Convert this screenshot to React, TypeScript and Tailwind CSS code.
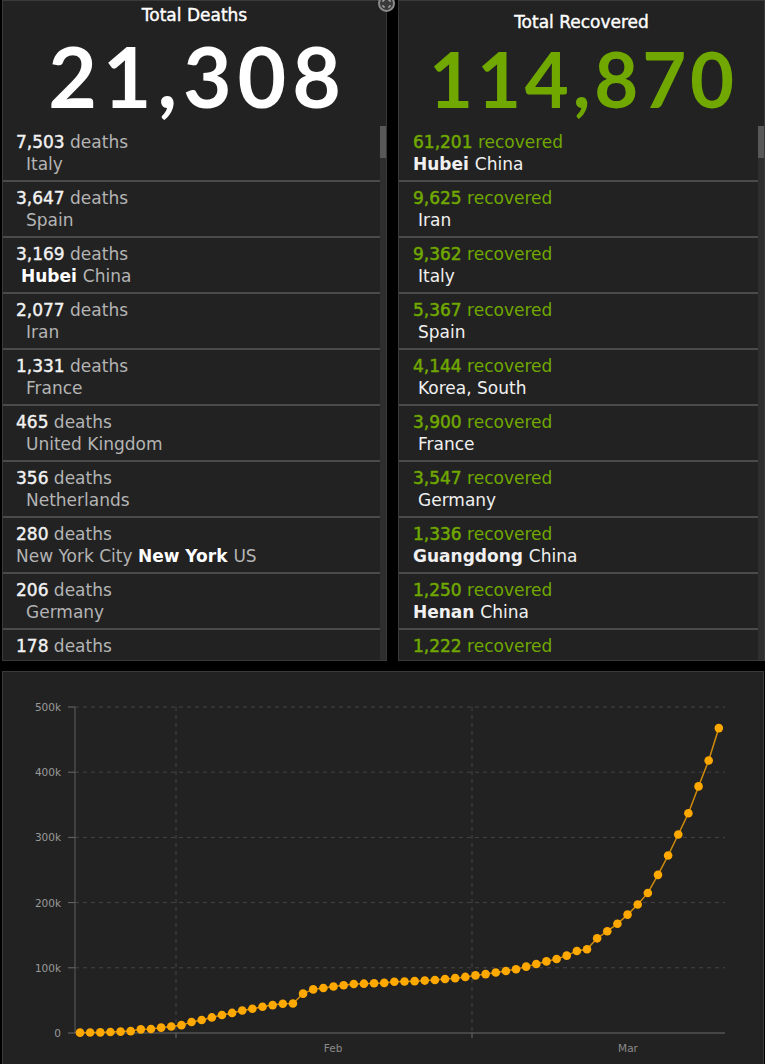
const deaths = [
  { n: "7,503", pre: "", bold: "", place: "Italy", indent: 10 },
  { n: "3,647", pre: "", bold: "", place: "Spain", indent: 10 },
  { n: "3,169", pre: "", bold: "Hubei", place: "China", indent: 5 },
  { n: "2,077", pre: "", bold: "", place: "Iran", indent: 10 },
  { n: "1,331", pre: "", bold: "", place: "France", indent: 10 },
  { n: "465", pre: "", bold: "", place: "United Kingdom", indent: 10 },
  { n: "356", pre: "", bold: "", place: "Netherlands", indent: 10 },
  { n: "280", pre: "New York City", bold: "New York", place: "US", indent: 0 },
  { n: "206", pre: "", bold: "", place: "Germany", indent: 10 },
  { n: "178", pre: "", bold: "", place: "", indent: 10 },
]

const recovered = [
  { n: "61,201", bold: "Hubei", place: "China", indent: 0 },
  { n: "9,625", bold: "", place: "Iran", indent: 5 },
  { n: "9,362", bold: "", place: "Italy", indent: 5 },
  { n: "5,367", bold: "", place: "Spain", indent: 5 },
  { n: "4,144", bold: "", place: "Korea, South", indent: 5 },
  { n: "3,900", bold: "", place: "France", indent: 5 },
  { n: "3,547", bold: "", place: "Germany", indent: 5 },
  { n: "1,336", bold: "Guangdong", place: "China", indent: 0 },
  { n: "1,250", bold: "Henan", place: "China", indent: 0 },
  { n: "1,222", bold: "", place: "", indent: 0 },
]

// global confirmed, Jan 22 .. Mar 25
const cases = [
  555, 654, 941, 1434, 2118, 2927, 5578, 6166, 8234, 9927, 12038, 16787, 19887, 23898, 27643, 30802,
  34395, 37129, 40160, 42769, 44811, 45229, 60381, 66909, 69052, 71235, 73270, 75152, 75652, 76212,
  76841, 78602, 78982, 79546, 80399, 81376, 82723, 84120, 86011, 88369, 90306, 92840, 95120, 97886,
  101801, 105847, 109821, 113590, 118620, 125875, 128352, 145205, 156101, 167454, 181574, 197102,
  214821, 242570, 272208, 304507, 336953, 378235, 418045, 467653,
]

const Scrollbar = () => (
  <div className="w-[6px] h-full bg-[#2e2e2e] shrink-0">
    <div className="h-[32px] bg-[#585858]" />
  </div>
)

const Chart = () => {
  const px = (i: number) => 80 + i * 10.14
  const py = (v: number) => 1033 - v * 0.000652
  const grid = [0, 100, 200, 300, 400, 500]
  const pts = cases.map((v, i) => `${px(i)},${py(v)}`).join(" ")
  return (
    <svg width="760" height="392" viewBox="3 672 760 392" className="block font-['DejaVu_Sans',sans-serif]">
      {grid.map((g) => {
        const y = 1033 - g * 0.652
        return (
          <g key={g}>
            {g > 0 && <line x1="75" x2="725" y1={y} y2={y} stroke="#454545" strokeDasharray="4 4" />}
            <line x1="68" x2="75" y1={y} y2={y} stroke="#6a6a6a" />
            <text x="61" y={y + 4} textAnchor="end" fontSize="10.5" fill="#9a9a9a">
              {g === 0 ? "0" : `${g}k`}
            </text>
          </g>
        )
      })}
      {[176, 472].map((x) => (
        <g key={x}>
          <line x1={x} x2={x} y1="707" y2="1033" stroke="#454545" strokeDasharray="4 4" />
          <line x1={x} x2={x} y1="1033" y2="1038" stroke="#6a6a6a" />
        </g>
      ))}
      <line x1="75" x2="75" y1="707" y2="1033" stroke="#5e5e5e" />
      <line x1="75" x2="725" y1="1033" y2="1033" stroke="#6a6a6a" />
      <text x="333" y="1052" textAnchor="middle" fontSize="10.5" fill="#8a8a8a">Feb</text>
      <text x="628" y="1052" textAnchor="middle" fontSize="10.5" fill="#8a8a8a">Mar</text>
      <polyline points={pts} fill="none" stroke="#d08c0c" strokeWidth="1.5" />
      {cases.map((v, i) => (
        <circle key={i} cx={px(i)} cy={py(v)} r="4.3" fill="#ffa800" />
      ))}
    </svg>
  )
}

export default function App() {
  return (
    <div className="w-[765px] h-[1064px] bg-black overflow-hidden font-['DejaVu_Sans',sans-serif] relative">
      <div className="flex gap-[11px] pl-[2px] h-[661px]">
        <section className="w-[385px] h-full border border-[#3a3a3a] bg-[#222] flex flex-col">
          <div className="h-[125px] shrink-0 flex flex-col items-center">
            <span className="text-white text-[17px] mt-[3px] leading-[22px] [-webkit-text-stroke:0.4px_white]">Total Deaths</span>
            <span className="text-white font-['Lato',sans-serif] text-[84px] font-bold leading-none tracking-[0.07em] mt-[8px] pl-[6px]">21,308</span>
          </div>
          <div className="flex flex-1 min-h-0">
            <div className="flex-1 overflow-hidden">
              {deaths.map((d) => (
                <div key={d.n} className="h-[56px] border-b-2 border-[#4b4b4b] pl-[13px] pt-[5px] text-[17px] leading-[22px]">
                  <div>
                    <span className="text-[#f2f2f2] [-webkit-text-stroke:0.4px_#f2f2f2]">{d.n}</span>
                    <span className="text-[#b4b4b4]"> deaths</span>
                  </div>
                  <div className="text-[#b4b4b4]" style={{ paddingLeft: d.indent }}>
                    {d.pre && <span>{d.pre} </span>}
                    {d.bold && <span className="text-white font-bold">{d.bold} </span>}
                    {d.place}
                  </div>
                </div>
              ))}
            </div>
            <Scrollbar />
          </div>
        </section>
        <section className="w-[367px] h-full border border-[#3a3a3a] bg-[#222] flex flex-col">
          <div className="h-[125px] shrink-0 flex flex-col items-center">
            <span className="text-white text-[17px] mt-[10px] leading-[22px] [-webkit-text-stroke:0.4px_white]">Total Recovered</span>
            <span className="text-[#70a800] font-['Lato',sans-serif] text-[76px] font-bold leading-none tracking-[0.05em] mt-[8px] pl-[4px]">114,870</span>
          </div>
          <div className="flex flex-1 min-h-0">
            <div className="flex-1 overflow-hidden">
              {recovered.map((d) => (
                <div key={d.n} className="h-[56px] border-b-2 border-[#4b4b4b] pl-[14px] pt-[5px] text-[17px] leading-[22px]">
                  <div className="text-[#70a800]">
                    <span className="[-webkit-text-stroke:0.5px_#70a800]">{d.n}</span>
                    <span> recovered</span>
                  </div>
                  <div className="text-[#f0f0f0]" style={{ paddingLeft: d.indent }}>
                    {d.bold && <span className="font-bold">{d.bold} </span>}
                    {d.place}
                  </div>
                </div>
              ))}
            </div>
            <Scrollbar />
          </div>
        </section>
      </div>
      <div className="absolute left-[378px] top-[-5px] w-[17px] h-[17px] rounded-full border-2 border-[#8a8a8a] bg-[#3a3a3a] flex items-center justify-center">
        <svg width="9" height="9" viewBox="0 0 9 9" fill="none" stroke="#bbb" strokeWidth="1">
          <path d="M1 3V1h2M6 1h2v2M8 6v2H6M3 8H1V6" />
        </svg>
      </div>
      <div className="mt-[10px] ml-[2px] w-[762px] h-[400px] border border-[#3a3a3a] bg-[#222]">
        <Chart />
      </div>
    </div>
  )
}
